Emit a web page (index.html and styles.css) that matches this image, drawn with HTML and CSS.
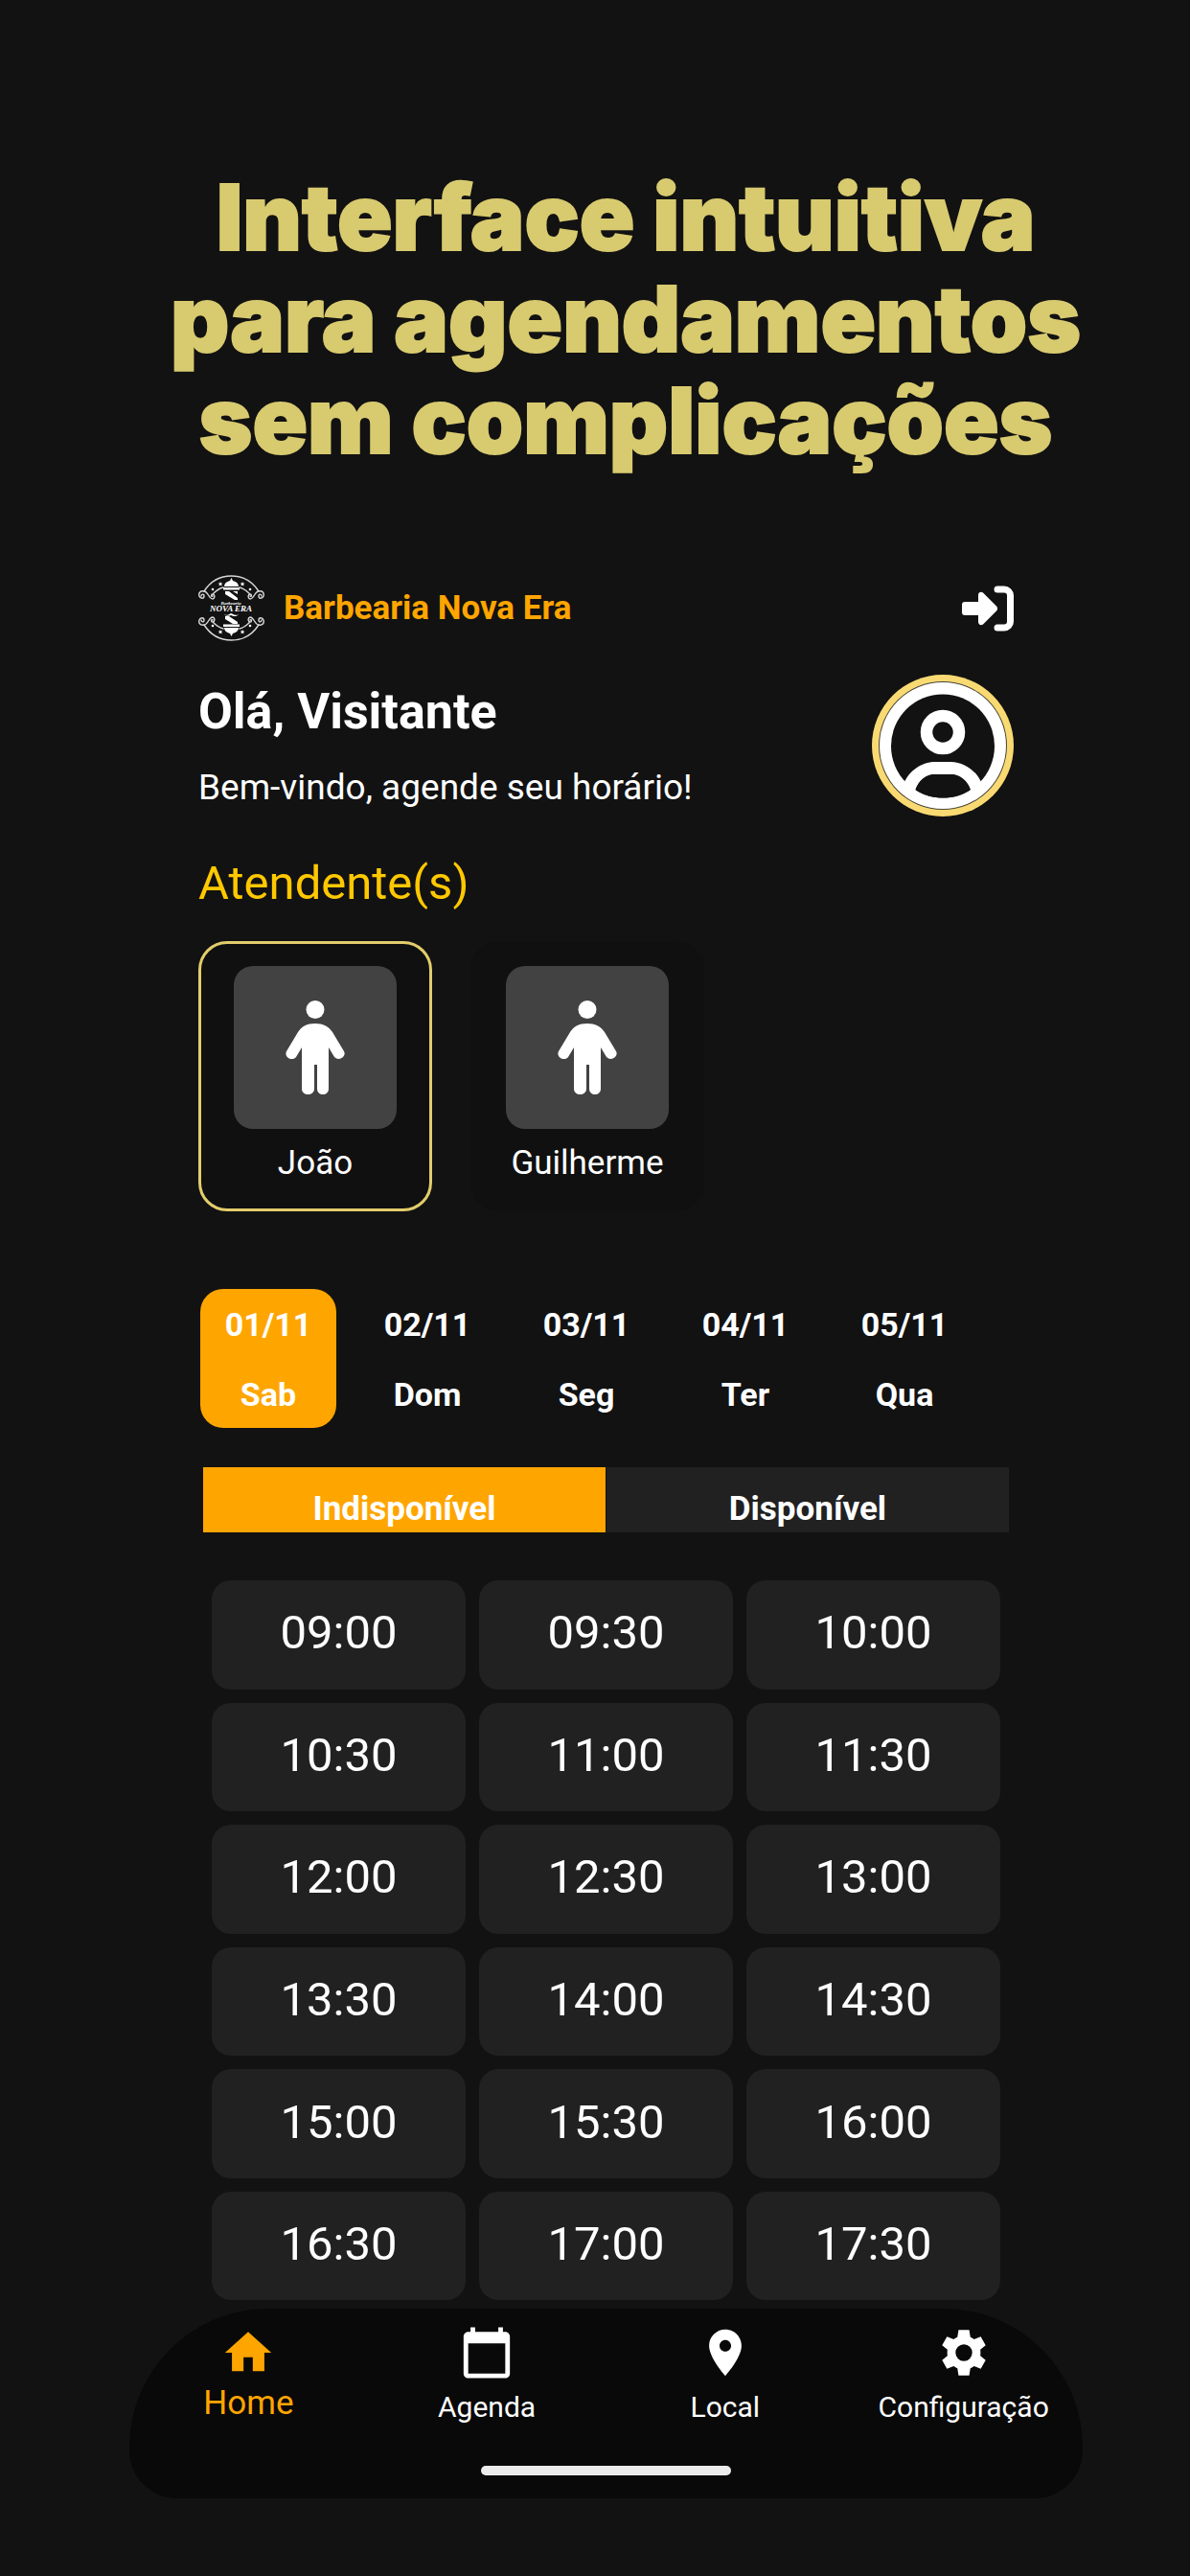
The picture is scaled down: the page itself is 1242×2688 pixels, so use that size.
FILE: index.html
```html
<!DOCTYPE html>
<html lang="pt-BR">
<head>
  <meta charset="UTF-8" />
  <meta name="viewport" content="width=device-width, initial-scale=1" />
  <title>Barbearia Nova Era</title>
  <link rel="stylesheet" href="styles.css">
</head>
<body>

  <h1 class="hero">Interface intuitiva<br>para agendamentos<br>sem complicações</h1>

  <div class="app">
    <main class="content">

      <!-- TOPO -->
      <header class="topbar">
        <svg class="logo" viewBox="0 0 69 69" aria-hidden="true">
          <g fill="none" stroke="#d8d8d8" stroke-width="1.4" stroke-linecap="round">
            <path d="M6 17C13 6 23 1 34.500 1S56 6 63 17" />
            <path d="M6 52C13 63 23 68 34.500 68S56 63 63 52" />
            <path d="M6 17C2 16 0 19 1 22s5 3 5 0-3-2-3 0M6 17c4 0 5 8 9 8 3-1 2-5 0-5s-2 3 0 2M15 20c3-3 6-6 11-7" />
            <path d="M63 17c4-1 6 2 5 5s-5 3-5 0 3-2 3 0M63 17c-4 0-5 8-9 8-3-1-2-5 0-5s2 3 0 2M54 20c-3-3-6-6-11-7" />
            <path d="M6 52c-4 1-6-2-5-5s5-3 5 0-3 2-3 0M6 52c4 0 5-8 9-8 3 1 2 5 0 5s-2-3 0-2M15 49c3 3 6 6 11 7" />
            <path d="M63 52c4 1 6-2 5-5s-5-3-5 0 3 2 3 0M63 52c-4 0-5-8-9-8-3 1-2 5 0 5s2-3 0-2M54 49c-3 3-6 6-11 7" />
          </g>
          <g fill="#fff">
            <path d="M34.500 3l1.500 3c4 1 6 3 6 6H27c0-3 2-5 6-6zM26 13h17v2.500H26zM28 17h4l9 7v2h-3l-10-6zM36 17h5v3z" />
            <path d="M34.500 64l-1.500-3c-4-1-6-3-6-6h15c0 3-2 5-6 6zM26 51.500h17V54H26zM28 43h4l9 6v2h-5l-8-5zM27 41c3 2 5 0 7-1 3 1 5 3 8 1-2 3-6 2-8 1-2 1-6 1-7-1z" />
            <path d="M23 7l.7 1.600 1.800.1-1.400 1.100.5 1.700-1.600-1-1.500 1 .5-1.700-1.400-1.100 1.800-.1zM46 7l.7 1.600 1.800.1-1.400 1.100.5 1.700-1.600-1-1.500 1 .5-1.700-1.400-1.100 1.800-.1zM23 57l.7 1.600 1.800.1-1.400 1.100.5 1.700-1.600-1-1.500 1 .5-1.700-1.400-1.100 1.800-.1zM46 57l.7 1.600 1.800.1-1.400 1.100.5 1.700-1.600-1-1.500 1 .5-1.700-1.400-1.100 1.800-.1z" />
            <circle cx="15" cy="15" r="1.300" /><circle cx="54" cy="15" r="1.300" />
            <circle cx="15" cy="53" r="1.300" /><circle cx="54" cy="53" r="1.300" />
          </g>
          <text class="logo-small" x="34" y="31" text-anchor="middle">Barbearia</text>
          <text class="logo-name" x="34" y="38" text-anchor="middle">NOVA ERA</text>
        </svg>
        <span class="brand">Barbearia Nova Era</span>
        <button class="login" aria-label="Entrar">
          <svg viewBox="0 0 54 48" aria-hidden="true">
            <path fill="#fff" d="M3 17h14v-7c0-3 3-4 5-2.500l14 14c1.500 1.500 1.500 3.500 0 5l-14 14c-2 1.500-5 .5-5-2.500v-7H3c-2 0-3-1-3-3v-8c0-2 1-3 3-3z" />
            <path fill="none" stroke="#fff" stroke-width="7" stroke-linecap="round" d="M37 4h7a6.500 6.500 0 0 1 6.500 6.500v27A6.500 6.500 0 0 1 44 44h-7" />
          </svg>
        </button>
      </header>

      <!-- SAUDAÇÃO -->
      <section class="greeting">
        <div class="greeting-text">
          <h2>Olá, Visitante</h2>
          <p>Bem-vindo, agende seu horário!</p>
        </div>
        <svg class="avatar" viewBox="0 0 148 148" aria-hidden="true">
          <circle cx="74" cy="74" r="74" fill="#f9da72" />
          <circle cx="74" cy="74" r="67" fill="#4a4638" />
          <circle cx="74" cy="74" r="66" fill="#fff" />
          <circle cx="74" cy="74.500" r="54" fill="#121212" />
          <circle cx="74" cy="60" r="17" fill="none" stroke="#fff" stroke-width="12.500" />
          <path fill="#fff" d="M34 112c5-11 17-21 32-21h16c15 0 27 10 32 21l-11 10c-3-11-11-18-21-18H66c-10 0-18 7-21 18z" />
          <path fill="#121212" d="M45.500 120c3-9 10-16 20.500-16h16c10.500 0 18 7 21 16-8 6-18 8.500-28.500 8.500S53.500 126 45.500 120z" />
        </svg>
      </section>

      <!-- ATENDENTES -->
      <h2 class="section-title">Atendente(s)</h2>
      <div class="attendants">
        <button class="attendant selected" aria-pressed="true">
          <span class="photo"><svg viewBox="0 0 62 98" aria-hidden="true"><circle cx="31" cy="9.500" r="9.500" /><path d="M31 24c8 0 14 3 18 9l12 20c3 5-5 11-10 6l-6-10v43c0 8-12 8-12 0V67h-3v25c0 8-13 8-13 0V49l-6 10c-4 5-13 0-10-6l12-20c4-6 9-9 18-9z" /></svg></span>
          João
        </button>
        <button class="attendant" aria-pressed="false">
          <span class="photo"><svg viewBox="0 0 62 98" aria-hidden="true"><circle cx="31" cy="9.500" r="9.500" /><path d="M31 24c8 0 14 3 18 9l12 20c3 5-5 11-10 6l-6-10v43c0 8-12 8-12 0V67h-3v25c0 8-13 8-13 0V49l-6 10c-4 5-13 0-10-6l12-20c4-6 9-9 18-9z" /></svg></span>
          Guilherme
        </button>
      </div>

      <!-- DATAS -->
      <div class="days">
        <button class="day active"><span>01/11</span><span>Sab</span></button>
        <button class="day"><span>02/11</span><span>Dom</span></button>
        <button class="day"><span>03/11</span><span>Seg</span></button>
        <button class="day"><span>04/11</span><span>Ter</span></button>
        <button class="day"><span>05/11</span><span>Qua</span></button>
      </div>

      <div class="tabs">
        <button class="tab active">Indisponível</button>
        <button class="tab">Disponível</button>
      </div>

      <!-- HORÁRIOS -->
      <div class="slots">
        <button class="slot">09:00</button>
        <button class="slot">09:30</button>
        <button class="slot">10:00</button>
        <button class="slot">10:30</button>
        <button class="slot">11:00</button>
        <button class="slot">11:30</button>
        <button class="slot">12:00</button>
        <button class="slot">12:30</button>
        <button class="slot">13:00</button>
        <button class="slot">13:30</button>
        <button class="slot">14:00</button>
        <button class="slot">14:30</button>
        <button class="slot">15:00</button>
        <button class="slot">15:30</button>
        <button class="slot">16:00</button>
        <button class="slot">16:30</button>
        <button class="slot">17:00</button>
        <button class="slot">17:30</button>
      </div>
    </main>

    <!-- MENU INFERIOR -->
    <nav class="bottom-nav">
      <div class="nav-links">
        <a class="nav-link current" href="#home">
          <svg viewBox="0 0 24 24" aria-hidden="true"><path d="M10 20v-6h4v6h5v-8h3L12 3 2 12h3v8z" /></svg>
          Home
        </a>
        <a class="nav-link" href="#agenda">
          <svg viewBox="0 0 24 24" aria-hidden="true"><path d="M20 3h-1V1h-2v2H7V1H5v2H4c-1.100 0-2 .9-2 2v16c0 1.100.9 2 2 2h16c1.100 0 2-.9 2-2V5c0-1.100-.9-2-2-2zm0 18H4V8h16v13z" /></svg>
          Agenda
        </a>
        <a class="nav-link" href="#local">
          <svg viewBox="0 0 24 24" aria-hidden="true"><path d="M12 2C8.130 2 5 5.130 5 9c0 5.250 7 13 7 13s7-7.750 7-13c0-3.870-3.130-7-7-7zm0 9.500c-1.380 0-2.500-1.120-2.500-2.500s1.120-2.500 2.500-2.500 2.500 1.120 2.500 2.500-1.120 2.500-2.500 2.500z" /></svg>
          Local
        </a>
        <a class="nav-link" href="#configuracao">
          <svg viewBox="0 0 24 24" aria-hidden="true"><path fill-rule="evenodd" d="M9.700 2.200h4.600l.5 3.100c.6.200 1.100.5 1.600.9l2.900-1.100 2.100 3.700-2.300 1.900c.1.900.1 1.700 0 2.600l2.300 1.900-2.100 3.700-2.900-1.100c-.5.400-1 .7-1.600.9l-.5 3.100H9.700l-.5-3.100c-.6-.2-1.100-.5-1.600-.9l-2.900 1.100-2.100-3.700 2.300-1.900c-.1-.9-.1-1.700 0-2.600L2.600 8.800l2.100-3.700 2.900 1.100c.5-.4 1-.7 1.600-.9zM12 8.400a3.600 3.600 0 1 0 0 7.200 3.600 3.600 0 0 0 0-7.200z" /></svg>
          Configuração
        </a>
      </div>
      <div class="home-bar"></div>
    </nav>
  </div>

</body>
</html>
```

FILE: styles.css
```css
* {
  box-sizing: border-box;
}
body {
  margin: 0;
  padding: 174px 0 76px;
  background: #121212;
  color: #fff;
  font-family: Roboto, sans-serif;
}
h1, h2, p {
  margin: 0;
}
button {
  border: 0;
  padding: 0;
  background: none;
  color: inherit;
  font-family: inherit;
}
svg {
  display: block;
  fill: currentColor;
}
.hero {
  padding-left: 64px;
  color: #d8ca6f;
  font-family: Inter, sans-serif;
  font-size: 95px;
  font-weight: 900;
  line-height: 106px;
  text-align: center;
  -webkit-text-stroke: 2px #d8ca6f;
}
.app {
  margin: 108px 112px 0 135px;
}
.content {
  padding: 0 72px;
}

/* topo */
.topbar {
  display: flex;
  align-items: center;
}
.logo {
  width: 69px;
  height: 69px;
}
.logo text {
  fill: #fff;
  font-family: "Liberation Serif", serif;
  font-style: italic;
  font-weight: bold;
}
.logo-small {
  font-size: 5px;
}
.logo-name {
  font-size: 9px;
}
.brand {
  margin-left: 20px;
  color: #ffa500;
  font-size: 35px;
  font-weight: 700;
}
.login {
  width: 54px;
  margin-left: auto;
}

/* saudação */
.greeting {
  display: flex;
  align-items: center;
  justify-content: space-between;
  margin-top: 35px;
}
.greeting h2 {
  font-size: 52px;
  font-weight: 700;
  line-height: 60px;
}
.greeting p {
  margin-top: 28px;
  font-size: 37px;
  line-height: 42px;
}
.avatar {
  width: 148px;
  height: 148px;
}

/* atendentes */
.section-title {
  margin-top: 42px;
  color: #ffc800;
  font-size: 49px;
  font-weight: 400;
  line-height: 56px;
}
.attendants {
  display: flex;
  gap: 40px;
  margin-top: 32px;
}
.attendant {
  width: 244px;
  padding: 23px 0 27px;
  border: 3px solid transparent;
  border-radius: 30px;
  background: #101010;
  font-size: 35px;
  line-height: 40px;
}
.attendant.selected {
  border-color: #e3cd6b;
}
.photo {
  display: flex;
  align-items: center;
  justify-content: center;
  width: 170px;
  height: 170px;
  margin: 0 auto 16px;
  border-radius: 20px;
  background: #424242;
}
.photo svg {
  height: 98px;
}

/* datas */
.days {
  display: flex;
  gap: 24px;
  margin: 81px 0 0 2px;
}
.day {
  display: flex;
  flex-direction: column;
  align-items: center;
  gap: 35px;
  width: 142px;
  padding: 18px 0 16px;
  border-radius: 24px;
  font-size: 34px;
  font-weight: 700;
  line-height: 38px;
}
.day.active {
  background: #ffa500;
}
.tabs {
  display: flex;
  gap: 1px;
  margin: 41px 5px 0;
}
.tab {
  flex: 1;
  padding: 25px 0 5px;
  background: #212121;
  font-size: 35px;
  font-weight: 700;
  line-height: 38px;
}
.tab.active {
  background: #ffa500;
}

/* horários */
.slots {
  display: grid;
  grid-template-columns: repeat(3, 1fr);
  gap: 14px;
  margin: 50px 14px 0;
}
.slot {
  aspect-ratio: 7 / 3;
  padding-bottom: 4px;
  border-radius: 20px;
  background: #212121;
  font-size: 49px;
}

/* menu inferior */
.bottom-nav {
  margin-top: 9px;
  padding: 17px 0 24px;
  border-radius: 145px 145px 50px 50px;
  background: #090909;
}
.nav-links {
  display: grid;
  grid-template-columns: repeat(4, 1fr);
  height: 147px;
}
.nav-link {
  display: flex;
  flex-direction: column;
  align-items: center;
  gap: 10px;
  color: #fff;
  font-size: 30px;
  line-height: 36px;
  text-decoration: none;
}
.nav-link svg {
  width: 58px;
  height: 58px;
}
.nav-link.current {
  gap: 6px;
  color: #ffa500;
  font-size: 35px;
}
.home-bar {
  width: 261px;
  height: 10px;
  margin: 0 auto;
  border-radius: 5px;
  background: #ececec;
}
```
